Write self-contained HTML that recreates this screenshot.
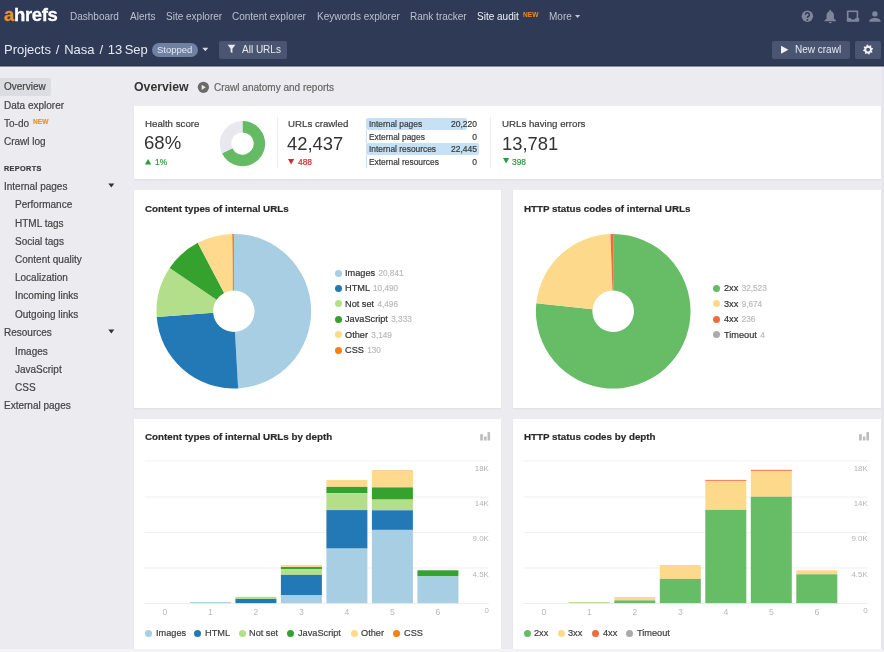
<!DOCTYPE html>
<html><head><meta charset="utf-8"><style>
html,body{margin:0;padding:0;}
body{width:884px;height:652px;overflow:hidden;position:relative;background:#ebebf0;font-family:"Liberation Sans", sans-serif;}
.t{position:absolute;white-space:nowrap;will-change:transform;-webkit-text-stroke:0.2px currentColor;}
.r{position:absolute;}
svg.r{overflow:visible;}
</style></head><body>
<div class="r" style="left:0px;top:0px;width:884px;height:66px;background:#2e3a56;"></div>
<div class="r" style="left:0px;top:64.8px;width:884px;height:1.2px;background:#27314a;"></div>
<div class="r" style="left:0px;top:66px;width:884px;height:1px;background:#8a90a0;"></div>
<div class="r" style="left:0px;top:67px;width:884px;height:2px;background:#eeeef2;"></div>
<div class="t" style="left:3.90px;top:5.74px;font-size:18.5px;line-height:18.5px;color:#ffffff;font-weight:700;-webkit-text-stroke:0;letter-spacing:-0.35px;-webkit-text-stroke:0.3px currentColor;"><span style="color:#f7901e">a</span>hrefs</div>
<div class="t" style="left:70.00px;top:11.83px;font-size:10px;line-height:10px;color:#b9c0cd;font-weight:400;-webkit-text-stroke:0;">Dashboard</div>
<div class="t" style="left:129.50px;top:11.83px;font-size:10px;line-height:10px;color:#b9c0cd;font-weight:400;-webkit-text-stroke:0;">Alerts</div>
<div class="t" style="left:165.60px;top:11.83px;font-size:10px;line-height:10px;color:#b9c0cd;font-weight:400;-webkit-text-stroke:0;">Site explorer</div>
<div class="t" style="left:232.30px;top:11.83px;font-size:10px;line-height:10px;color:#b9c0cd;font-weight:400;-webkit-text-stroke:0;">Content explorer</div>
<div class="t" style="left:317.00px;top:11.83px;font-size:10px;line-height:10px;color:#b9c0cd;font-weight:400;-webkit-text-stroke:0;">Keywords explorer</div>
<div class="t" style="left:410.40px;top:11.83px;font-size:10px;line-height:10px;color:#b9c0cd;font-weight:400;-webkit-text-stroke:0;">Rank tracker</div>
<div class="t" style="left:477.40px;top:11.83px;font-size:10px;line-height:10px;color:#eef0f4;font-weight:400;-webkit-text-stroke:0;">Site audit</div>
<div class="t" style="left:522.80px;top:11.71px;font-size:6.6px;line-height:6.6px;color:#f08c1c;font-weight:700;-webkit-text-stroke:0;">NEW</div>
<div class="t" style="left:548.60px;top:11.83px;font-size:10px;line-height:10px;color:#b9c0cd;font-weight:400;-webkit-text-stroke:0;">More</div>
<svg class="r" style="left:575.3px;top:15.2px" width="6" height="4"><path d="M0 0h5.2l-2.6 3z" fill="#c3c9d6"/></svg>
<svg class="r" style="left:800px;top:9px" width="84" height="15" viewBox="0 0 84 15">
<circle cx="7.4" cy="7.3" r="5.7" fill="#7d869b"/>
<path d="M5.5 5.7A1.95 1.95 0 1 1 8.3 7.5Q7.4 7.9 7.4 9" fill="none" stroke="#2e3a56" stroke-width="1.5"/>
<circle cx="7.4" cy="10.9" r="0.85" fill="#2e3a56"/>
<circle cx="30.25" cy="2" r="1.1" fill="#7d869b"/>
<path d="M30.25 2.2c-2.3 0-3.7 1.9-3.7 4.2v2.5c0 0.9-1 1.7-2 2.4v0.9h11.4v-0.9c-1-0.7-2-1.5-2-2.4V6.4c0-2.3-1.4-4.2-3.7-4.2z" fill="#7d869b"/>
<path d="M28.75 12.9h3a1.5 1.3 0 0 1-3 0z" fill="#7d869b"/>
<rect x="47.7" y="2.3" width="9.7" height="9.5" fill="none" stroke="#7d869b" stroke-width="1.6"/>
<path d="M46.9 9h3.5l1.3 1.5h2.8l1.3-1.5h3.4v3.6H46.9z" fill="#7d869b"/>
<circle cx="74.9" cy="4.9" r="2.7" fill="#7d869b"/>
<path d="M69.1 12.7c0-2.4 2.6-3.8 5.8-3.8s5.8 1.4 5.8 3.8z" fill="#7d869b"/>
</svg>
<div class="t" style="left:4.00px;top:42.60px;font-size:13px;line-height:13px;color:#e6e9ef;font-weight:400;-webkit-text-stroke:0;word-spacing:-1.2px;">Projects&nbsp;&nbsp;/&nbsp;&nbsp;Nasa&nbsp;&nbsp;/&nbsp;&nbsp;13 Sep</div>
<div class="r" style="left:151.8px;top:42.5px;width:46px;height:14.2px;background:#7080a2;border-radius:8px;"></div>
<div class="t" style="left:157.30px;top:45.26px;font-size:9.5px;line-height:9.5px;color:#e3e7ef;font-weight:400;-webkit-text-stroke:0;">Stopped</div>
<svg class="r" style="left:202px;top:47px" width="7" height="5"><path d="M0.3 0.8h6l-3 3.4z" fill="#d5dae4"/></svg>
<div class="r" style="left:219px;top:40.5px;width:68px;height:18.2px;background:#4a5671;border-radius:2px;"></div>
<svg class="r" style="left:227px;top:44px" width="9" height="10"><path d="M0.6 0.8h7.8L5.4 4.8v4.4L3.6 7.9V4.8z" fill="#e6e9ef"/></svg>
<div class="t" style="left:241.70px;top:45.13px;font-size:10px;line-height:10px;color:#e6e9ef;font-weight:400;-webkit-text-stroke:0;">All URLs</div>
<div class="r" style="left:772.4px;top:40.5px;width:77.4px;height:18.3px;background:#4a5671;border-radius:2px;"></div>
<svg class="r" style="left:780px;top:45px" width="10" height="10"><path d="M1 0.8L8.4 4.8 1 8.8z" fill="#f0f2f6"/></svg>
<div class="t" style="left:795.20px;top:45.23px;font-size:10px;line-height:10px;color:#e6e9ef;font-weight:400;-webkit-text-stroke:0;">New crawl</div>
<div class="r" style="left:855.2px;top:40.5px;width:25.5px;height:18.3px;background:#4a5671;border-radius:2px;"></div>
<svg class="r" style="left:0;top:0" width="884" height="66"><path d="M866.65 44.82 L867.61 44.62 L868.47 45.82 L869.20 45.96 L870.46 45.19 L871.27 45.73 L871.04 47.19 L871.45 47.81 L872.88 48.15 L873.08 49.11 L871.88 49.97 L871.74 50.70 L872.51 51.96 L871.97 52.77 L870.51 52.54 L869.89 52.95 L869.55 54.38 L868.59 54.58 L867.73 53.38 L867.00 53.24 L865.74 54.01 L864.93 53.47 L865.16 52.01 L864.75 51.39 L863.32 51.05 L863.12 50.09 L864.32 49.23 L864.46 48.50 L863.69 47.24 L864.23 46.43 L865.69 46.66 L866.31 46.25Z M870.0 49.6 A1.9 1.9 0 1 0 866.2 49.6 A1.9 1.9 0 1 0 870.0 49.6Z" fill="#f0f2f6" fill-rule="evenodd"/></svg>
<div class="r" style="left:0px;top:78px;width:50.7px;height:17.7px;background:#dcdde3;border-radius:0 2px 2px 0;"></div>
<div class="t" style="left:4.20px;top:82.44px;font-size:10px;line-height:10px;color:#444444;font-weight:400;">Overview</div>
<div class="t" style="left:4.20px;top:100.84px;font-size:10px;line-height:10px;color:#444444;font-weight:400;">Data explorer</div>
<div class="t" style="left:4.20px;top:119.03px;font-size:10px;line-height:10px;color:#444444;font-weight:400;">To-do</div>
<div class="t" style="left:4.20px;top:137.34px;font-size:10px;line-height:10px;color:#444444;font-weight:400;">Crawl log</div>
<div class="t" style="left:33.20px;top:118.51px;font-size:6.6px;line-height:6.6px;color:#f7901e;font-weight:700;">NEW</div>
<div class="t" style="left:4.30px;top:165.12px;font-size:7.3px;line-height:7.3px;color:#3a3a3a;font-weight:700;letter-spacing:0.35px;">REPORTS</div>
<div class="t" style="left:4.20px;top:182.24px;font-size:10px;line-height:10px;color:#444444;font-weight:400;">Internal pages</div>
<svg class="r" style="left:108px;top:183px" width="7" height="5"><path d="M0.3 0.4h6l-3 4.2z" fill="#333"/></svg>
<div class="t" style="left:15.40px;top:200.44px;font-size:10px;line-height:10px;color:#444444;font-weight:400;">Performance</div>
<div class="t" style="left:15.40px;top:218.63px;font-size:10px;line-height:10px;color:#444444;font-weight:400;">HTML tags</div>
<div class="t" style="left:15.40px;top:236.83px;font-size:10px;line-height:10px;color:#444444;font-weight:400;">Social tags</div>
<div class="t" style="left:15.40px;top:255.03px;font-size:10px;line-height:10px;color:#444444;font-weight:400;">Content quality</div>
<div class="t" style="left:15.40px;top:273.23px;font-size:10px;line-height:10px;color:#444444;font-weight:400;">Localization</div>
<div class="t" style="left:15.40px;top:291.43px;font-size:10px;line-height:10px;color:#444444;font-weight:400;">Incoming links</div>
<div class="t" style="left:15.40px;top:309.63px;font-size:10px;line-height:10px;color:#444444;font-weight:400;">Outgoing links</div>
<div class="t" style="left:4.20px;top:328.44px;font-size:10px;line-height:10px;color:#444444;font-weight:400;">Resources</div>
<svg class="r" style="left:108px;top:329px" width="7" height="5"><path d="M0.3 0.4h6l-3 4.2z" fill="#333"/></svg>
<div class="t" style="left:15.40px;top:346.63px;font-size:10px;line-height:10px;color:#444444;font-weight:400;">Images</div>
<div class="t" style="left:15.40px;top:364.83px;font-size:10px;line-height:10px;color:#444444;font-weight:400;">JavaScript</div>
<div class="t" style="left:15.40px;top:383.03px;font-size:10px;line-height:10px;color:#444444;font-weight:400;">CSS</div>
<div class="t" style="left:4.20px;top:401.24px;font-size:10px;line-height:10px;color:#444444;font-weight:400;">External pages</div>
<div class="t" style="left:133.80px;top:81.49px;font-size:12.3px;line-height:12.3px;color:#353535;font-weight:700;-webkit-text-stroke:0;">Overview</div>
<svg class="r" style="left:197px;top:81px" width="13" height="13"><circle cx="6.4" cy="6.3" r="5.6" fill="#6a6a6a"/><path d="M4.7 3.7l4 2.6-4 2.6z" fill="#ebebf0"/></svg>
<div class="t" style="left:214.00px;top:83.34px;font-size:10px;line-height:10px;color:#666666;font-weight:400;">Crawl anatomy and reports</div>
<div class="r" style="left:134px;top:106px;width:746.6px;height:73.2px;background:#ffffff;box-shadow:0 1px 1.5px rgba(40,40,70,0.07);"></div>
<div class="t" style="left:144.90px;top:119.39px;font-size:9.7px;line-height:9.7px;color:#3c3c3c;font-weight:400;">Health score</div>
<div class="t" style="left:144.20px;top:134.46px;font-size:18.6px;line-height:18.6px;color:#333333;font-weight:400;-webkit-text-stroke:0;">68%</div>
<svg class="r" style="left:145px;top:158.6px" width="8" height="7"><path d="M0 5.6h6.2L3.1 0z" fill="#2e9a3e"/></svg>
<div class="t" style="left:154.60px;top:158.09px;font-size:8.4px;line-height:8.4px;color:#2e9a3e;font-weight:400;">1%</div>
<svg class="r" style="left:0;top:0" width="884" height="652"><path d="M242.500 121.000A22.6 22.6 0 1 1 222.051 153.223L232.366 148.369A11.2 11.2 0 1 0 242.500 132.400Z" fill="#65bb64"/><path d="M222.051 153.223A22.6 22.6 0 0 1 242.500 121.000L242.500 132.400A11.2 11.2 0 0 0 232.366 148.369Z" fill="#e8e8ee"/></svg>
<div class="r" style="left:276.6px;top:117px;width:1px;height:51px;background:#ececf0;"></div>
<div class="t" style="left:288.00px;top:119.39px;font-size:9.7px;line-height:9.7px;color:#3c3c3c;font-weight:400;">URLs crawled</div>
<div class="t" style="left:287.40px;top:134.62px;font-size:18.4px;line-height:18.4px;color:#333333;font-weight:400;-webkit-text-stroke:0;">42,437</div>
<svg class="r" style="left:288.3px;top:158.6px" width="8" height="7"><path d="M0 0h6.2L3.1 5.6z" fill="#d4262f"/></svg>
<div class="t" style="left:298.00px;top:158.09px;font-size:8.4px;line-height:8.4px;color:#d4262f;font-weight:400;">488</div>
<div class="r" style="left:366px;top:117.6px;width:101.3px;height:12.4px;background:#c5e1f3;border-radius:2px;"></div>
<div class="r" style="left:366px;top:130px;width:1px;height:13px;background:#c5e1f3;"></div>
<div class="r" style="left:366px;top:143px;width:113px;height:12.4px;background:#c5e1f3;border-radius:2px;"></div>
<div class="r" style="left:366px;top:155.4px;width:1px;height:12.6px;background:#c5e1f3;"></div>
<div class="t" style="left:368.70px;top:120.49px;font-size:8.4px;line-height:8.4px;color:#3a3a3a;font-weight:400;">Internal pages</div>
<div class="t" style="left:400px;width:77px;text-align:right;top:120.49px;font-size:8.5px;line-height:8.4px;color:#3a3a3a">20,220</div>
<div class="t" style="left:368.70px;top:132.99px;font-size:8.4px;line-height:8.4px;color:#3a3a3a;font-weight:400;">External pages</div>
<div class="t" style="left:400px;width:77px;text-align:right;top:132.99px;font-size:8.5px;line-height:8.4px;color:#3a3a3a">0</div>
<div class="t" style="left:368.70px;top:145.49px;font-size:8.4px;line-height:8.4px;color:#3a3a3a;font-weight:400;">Internal resources</div>
<div class="t" style="left:400px;width:77px;text-align:right;top:145.49px;font-size:8.5px;line-height:8.4px;color:#3a3a3a">22,445</div>
<div class="t" style="left:368.70px;top:157.99px;font-size:8.4px;line-height:8.4px;color:#3a3a3a;font-weight:400;">External resources</div>
<div class="t" style="left:400px;width:77px;text-align:right;top:157.99px;font-size:8.5px;line-height:8.4px;color:#3a3a3a">0</div>
<div class="r" style="left:490px;top:117px;width:1px;height:51px;background:#ececf0;"></div>
<div class="t" style="left:502.30px;top:119.39px;font-size:9.7px;line-height:9.7px;color:#3c3c3c;font-weight:400;">URLs having errors</div>
<div class="t" style="left:502.20px;top:134.62px;font-size:18.4px;line-height:18.4px;color:#333333;font-weight:400;-webkit-text-stroke:0;">13,781</div>
<svg class="r" style="left:502.6px;top:158.4px" width="8" height="7"><path d="M0 0h6.2L3.1 5.6z" fill="#2e9a3e"/></svg>
<div class="t" style="left:511.80px;top:158.09px;font-size:8.4px;line-height:8.4px;color:#2e9a3e;font-weight:400;">398</div>
<div class="r" style="left:134px;top:190.3px;width:367.4px;height:217.5px;background:#ffffff;box-shadow:0 1px 1.5px rgba(40,40,70,0.07);"></div>
<div class="r" style="left:512.7px;top:190.3px;width:367.9px;height:217.5px;background:#ffffff;box-shadow:0 1px 1.5px rgba(40,40,70,0.07);"></div>
<div class="r" style="left:134px;top:418.5px;width:367.4px;height:230.7px;background:#ffffff;box-shadow:0 1px 1.5px rgba(40,40,70,0.07);"></div>
<div class="r" style="left:512.7px;top:418.5px;width:367.9px;height:230.7px;background:#ffffff;box-shadow:0 1px 1.5px rgba(40,40,70,0.07);"></div>
<div class="t" style="left:145.00px;top:204.00px;font-size:9.8px;line-height:9.8px;color:#2b2b2b;font-weight:700;">Content types of internal URLs</div>
<div class="t" style="left:524.00px;top:204.00px;font-size:9.8px;line-height:9.8px;color:#2b2b2b;font-weight:700;">HTTP status codes of internal URLs</div>
<div class="t" style="left:145.00px;top:432.30px;font-size:9.8px;line-height:9.8px;color:#2b2b2b;font-weight:700;">Content types of internal URLs by depth</div>
<div class="t" style="left:524.00px;top:432.30px;font-size:9.8px;line-height:9.8px;color:#2b2b2b;font-weight:700;">HTTP status codes by depth</div>
<svg class="r" style="left:0;top:0" width="884" height="652"><path d="M233.800 233.900A77.3 77.3 0 0 1 238.129 388.379L234.959 331.868A20.7 20.7 0 0 0 233.800 290.500Z" fill="#a8cee4"/><path d="M238.129 388.379A77.3 77.3 0 0 1 156.710 316.897L213.156 312.726A20.7 20.7 0 0 0 234.959 331.868Z" fill="#2379b5"/><path d="M156.710 316.897A77.3 77.3 0 0 1 169.649 268.073L216.621 299.651A20.7 20.7 0 0 0 213.156 312.726Z" fill="#b3df8b"/><path d="M169.649 268.073A77.3 77.3 0 0 1 197.730 242.831L224.141 292.892A20.7 20.7 0 0 0 216.621 299.651Z" fill="#35a12f"/><path d="M197.730 242.831A77.3 77.3 0 0 1 232.312 233.914L233.402 290.504A20.7 20.7 0 0 0 224.141 292.892Z" fill="#fed98e"/><path d="M232.312 233.914A77.3 77.3 0 0 1 233.800 233.900L233.800 290.500A20.7 20.7 0 0 0 233.402 290.504Z" fill="#fd7f10"/><path d="M233.4 290.5V233.9" stroke="#fd7f10" stroke-width="1.1"/><path d="M613.200 234.000A77.3 77.3 0 1 1 536.309 303.357L592.510 309.163A20.8 20.8 0 1 0 613.200 290.500Z" fill="#67bc66"/><path d="M536.309 303.357A77.3 77.3 0 0 1 610.454 234.049L612.461 290.513A20.8 20.8 0 0 0 592.510 309.163Z" fill="#fdd98b"/><path d="M610.454 234.049A77.3 77.3 0 0 1 613.154 234.000L613.188 290.500A20.8 20.8 0 0 0 612.461 290.513Z" fill="#f26a3b"/><path d="M613.154 234.000A77.3 77.3 0 0 1 613.200 234.000L613.200 290.500A20.8 20.8 0 0 0 613.188 290.500Z" fill="#aaaaaa"/></svg>
<div class="r" style="left:334.5px;top:269.50px;width:7px;height:7px;border-radius:50%;background:#a8cee4"></div>
<div class="t" style="left:345.00px;top:268.91px;font-size:9.2px;line-height:9.2px;color:#333;font-weight:400;">Images <span style="color:#bababa;font-size:8.2px;margin-left:0.8px">20,841</span></div>
<div class="r" style="left:334.5px;top:284.95px;width:7px;height:7px;border-radius:50%;background:#2379b5"></div>
<div class="t" style="left:345.00px;top:284.36px;font-size:9.2px;line-height:9.2px;color:#333;font-weight:400;">HTML <span style="color:#bababa;font-size:8.2px;margin-left:0.8px">10,490</span></div>
<div class="r" style="left:334.5px;top:300.40px;width:7px;height:7px;border-radius:50%;background:#b3df8b"></div>
<div class="t" style="left:345.00px;top:299.81px;font-size:9.2px;line-height:9.2px;color:#333;font-weight:400;">Not set <span style="color:#bababa;font-size:8.2px;margin-left:0.8px">4,496</span></div>
<div class="r" style="left:334.5px;top:315.85px;width:7px;height:7px;border-radius:50%;background:#35a12f"></div>
<div class="t" style="left:345.00px;top:315.26px;font-size:9.2px;line-height:9.2px;color:#333;font-weight:400;">JavaScript <span style="color:#bababa;font-size:8.2px;margin-left:0.8px">3,333</span></div>
<div class="r" style="left:334.5px;top:331.30px;width:7px;height:7px;border-radius:50%;background:#fed98e"></div>
<div class="t" style="left:345.00px;top:330.71px;font-size:9.2px;line-height:9.2px;color:#333;font-weight:400;">Other <span style="color:#bababa;font-size:8.2px;margin-left:0.8px">3,149</span></div>
<div class="r" style="left:334.5px;top:346.75px;width:7px;height:7px;border-radius:50%;background:#fd7f10"></div>
<div class="t" style="left:345.00px;top:346.16px;font-size:9.2px;line-height:9.2px;color:#333;font-weight:400;">CSS <span style="color:#bababa;font-size:8.2px;margin-left:0.8px">130</span></div>
<div class="r" style="left:713.1px;top:285.00px;width:7px;height:7px;border-radius:50%;background:#67bc66"></div>
<div class="t" style="left:724.00px;top:284.41px;font-size:9.2px;line-height:9.2px;color:#333;font-weight:400;">2xx <span style="color:#bababa;font-size:8.2px;margin-left:0.8px">32,523</span></div>
<div class="r" style="left:713.1px;top:300.40px;width:7px;height:7px;border-radius:50%;background:#fdd98b"></div>
<div class="t" style="left:724.00px;top:299.81px;font-size:9.2px;line-height:9.2px;color:#333;font-weight:400;">3xx <span style="color:#bababa;font-size:8.2px;margin-left:0.8px">9,674</span></div>
<div class="r" style="left:713.1px;top:315.80px;width:7px;height:7px;border-radius:50%;background:#f26a3b"></div>
<div class="t" style="left:724.00px;top:315.21px;font-size:9.2px;line-height:9.2px;color:#333;font-weight:400;">4xx <span style="color:#bababa;font-size:8.2px;margin-left:0.8px">236</span></div>
<div class="r" style="left:713.1px;top:331.20px;width:7px;height:7px;border-radius:50%;background:#aaaaaa"></div>
<div class="t" style="left:724.00px;top:330.61px;font-size:9.2px;line-height:9.2px;color:#333;font-weight:400;">Timeout <span style="color:#bababa;font-size:8.2px;margin-left:0.8px">4</span></div>
<svg class="r" style="left:0;top:0" width="884" height="652"><rect x="144.70000000000002" y="460.5" width="344" height="1" fill="#efefef"/><rect x="144.70000000000002" y="496.5" width="344" height="1" fill="#efefef"/><rect x="144.70000000000002" y="532.0" width="344" height="1" fill="#efefef"/><rect x="144.70000000000002" y="567.5" width="344" height="1" fill="#efefef"/><rect x="144.70000000000002" y="603" width="344" height="1" fill="#ececec"/><text x="164.90" y="615.3" font-family="Liberation Sans" font-size="8.6" fill="#b8b8b8" text-anchor="middle">0</text><rect x="189.90" y="602.10" width="41" height="1.00" fill="#a8cee4"/><text x="210.40" y="615.3" font-family="Liberation Sans" font-size="8.6" fill="#b8b8b8" text-anchor="middle">1</text><rect x="235.40" y="596.80" width="41" height="2.20" fill="#b3df8b"/><rect x="235.40" y="599.00" width="41" height="4.10" fill="#2379b5"/><text x="255.90" y="615.3" font-family="Liberation Sans" font-size="8.6" fill="#b8b8b8" text-anchor="middle">2</text><rect x="280.90" y="564.90" width="41" height="2.10" fill="#fed98e"/><rect x="280.90" y="567.00" width="41" height="2.20" fill="#35a12f"/><rect x="280.90" y="569.20" width="41" height="5.70" fill="#b3df8b"/><rect x="280.90" y="574.90" width="41" height="20.10" fill="#2379b5"/><rect x="280.90" y="595.00" width="41" height="8.10" fill="#a8cee4"/><text x="301.40" y="615.3" font-family="Liberation Sans" font-size="8.6" fill="#b8b8b8" text-anchor="middle">3</text><rect x="326.40" y="479.90" width="41" height="7.00" fill="#fed98e"/><rect x="326.40" y="486.90" width="41" height="6.30" fill="#35a12f"/><rect x="326.40" y="493.20" width="41" height="16.90" fill="#b3df8b"/><rect x="326.40" y="510.10" width="41" height="38.50" fill="#2379b5"/><rect x="326.40" y="548.60" width="41" height="54.50" fill="#a8cee4"/><text x="346.90" y="615.3" font-family="Liberation Sans" font-size="8.6" fill="#b8b8b8" text-anchor="middle">4</text><rect x="371.90" y="470.00" width="41" height="0.70" fill="#fdb77a"/><rect x="371.90" y="470.70" width="41" height="16.70" fill="#fed98e"/><rect x="371.90" y="487.40" width="41" height="12.20" fill="#35a12f"/><rect x="371.90" y="499.60" width="41" height="10.70" fill="#b3df8b"/><rect x="371.90" y="510.30" width="41" height="19.60" fill="#2379b5"/><rect x="371.90" y="529.90" width="41" height="73.20" fill="#a8cee4"/><text x="392.40" y="615.3" font-family="Liberation Sans" font-size="8.6" fill="#b8b8b8" text-anchor="middle">5</text><rect x="417.40" y="570.30" width="41" height="6.10" fill="#35a12f"/><rect x="417.40" y="576.40" width="41" height="26.70" fill="#a8cee4"/><text x="437.90" y="615.3" font-family="Liberation Sans" font-size="8.6" fill="#b8b8b8" text-anchor="middle">6</text><text x="488.79999999999995" y="470.7" font-family="Liberation Sans" font-size="7.9" fill="#b3b3b3" text-anchor="end">18K</text><text x="488.79999999999995" y="505.7" font-family="Liberation Sans" font-size="7.9" fill="#b3b3b3" text-anchor="end">14K</text><text x="488.79999999999995" y="541.2" font-family="Liberation Sans" font-size="7.9" fill="#b3b3b3" text-anchor="end">9.0K</text><text x="488.79999999999995" y="576.5" font-family="Liberation Sans" font-size="7.9" fill="#b3b3b3" text-anchor="end">4.5K</text><text x="488.79999999999995" y="612.6" font-family="Liberation Sans" font-size="7.9" fill="#b3b3b3" text-anchor="end">0</text><rect x="480.20000000000005" y="434.2" width="2.7" height="6.3" fill="#bdbdbd"/><rect x="484.00000000000006" y="436.5" width="2.5" height="4" fill="#bdbdbd"/><rect x="487.50000000000006" y="432.1" width="2.6" height="8.4" fill="#bdbdbd"/></svg>
<svg class="r" style="left:0;top:0" width="884" height="652"><rect x="523.5999999999999" y="460.5" width="344" height="1" fill="#efefef"/><rect x="523.5999999999999" y="496.5" width="344" height="1" fill="#efefef"/><rect x="523.5999999999999" y="532.0" width="344" height="1" fill="#efefef"/><rect x="523.5999999999999" y="567.5" width="344" height="1" fill="#efefef"/><rect x="523.5999999999999" y="603" width="344" height="1" fill="#ececec"/><text x="543.80" y="615.3" font-family="Liberation Sans" font-size="8.6" fill="#b8b8b8" text-anchor="middle">0</text><rect x="568.80" y="602.10" width="41" height="1.00" fill="#b3df8b"/><text x="589.30" y="615.3" font-family="Liberation Sans" font-size="8.6" fill="#b8b8b8" text-anchor="middle">1</text><rect x="614.30" y="597.00" width="41" height="3.40" fill="#fdd98b"/><rect x="614.30" y="600.40" width="41" height="2.70" fill="#67bc66"/><text x="634.80" y="615.3" font-family="Liberation Sans" font-size="8.6" fill="#b8b8b8" text-anchor="middle">2</text><rect x="659.80" y="565.00" width="41" height="13.90" fill="#fdd98b"/><rect x="659.80" y="578.90" width="41" height="24.20" fill="#67bc66"/><text x="680.30" y="615.3" font-family="Liberation Sans" font-size="8.6" fill="#b8b8b8" text-anchor="middle">3</text><rect x="705.30" y="479.90" width="41" height="1.30" fill="#f5845f"/><rect x="705.30" y="481.20" width="41" height="28.70" fill="#fdd98b"/><rect x="705.30" y="509.90" width="41" height="93.20" fill="#67bc66"/><text x="725.80" y="615.3" font-family="Liberation Sans" font-size="8.6" fill="#b8b8b8" text-anchor="middle">4</text><rect x="750.80" y="469.80" width="41" height="1.30" fill="#f5845f"/><rect x="750.80" y="471.10" width="41" height="25.60" fill="#fdd98b"/><rect x="750.80" y="496.70" width="41" height="106.40" fill="#67bc66"/><text x="771.30" y="615.3" font-family="Liberation Sans" font-size="8.6" fill="#b8b8b8" text-anchor="middle">5</text><rect x="796.30" y="570.30" width="41" height="4.00" fill="#fdd98b"/><rect x="796.30" y="574.30" width="41" height="28.80" fill="#67bc66"/><text x="816.80" y="615.3" font-family="Liberation Sans" font-size="8.6" fill="#b8b8b8" text-anchor="middle">6</text><text x="867.6999999999999" y="470.7" font-family="Liberation Sans" font-size="7.9" fill="#b3b3b3" text-anchor="end">18K</text><text x="867.6999999999999" y="505.7" font-family="Liberation Sans" font-size="7.9" fill="#b3b3b3" text-anchor="end">14K</text><text x="867.6999999999999" y="541.2" font-family="Liberation Sans" font-size="7.9" fill="#b3b3b3" text-anchor="end">9.0K</text><text x="867.6999999999999" y="576.5" font-family="Liberation Sans" font-size="7.9" fill="#b3b3b3" text-anchor="end">4.5K</text><text x="867.6999999999999" y="612.6" font-family="Liberation Sans" font-size="7.9" fill="#b3b3b3" text-anchor="end">0</text><rect x="859.0999999999999" y="434.2" width="2.7" height="6.3" fill="#bdbdbd"/><rect x="862.8999999999999" y="436.5" width="2.5" height="4" fill="#bdbdbd"/><rect x="866.3999999999999" y="432.1" width="2.6" height="8.4" fill="#bdbdbd"/></svg>
<div class="r" style="left:144.60px;top:629.6px;width:7px;height:7px;border-radius:50%;background:#a8cee4"></div>
<div class="t" style="left:155.80px;top:629.11px;font-size:9.2px;line-height:9.2px;color:#404040;font-weight:400;">Images</div>
<div class="r" style="left:193.80px;top:629.6px;width:7px;height:7px;border-radius:50%;background:#2379b5"></div>
<div class="t" style="left:204.70px;top:629.11px;font-size:9.2px;line-height:9.2px;color:#404040;font-weight:400;">HTML</div>
<div class="r" style="left:239.10px;top:629.6px;width:7px;height:7px;border-radius:50%;background:#b3df8b"></div>
<div class="t" style="left:249.00px;top:629.11px;font-size:9.2px;line-height:9.2px;color:#404040;font-weight:400;">Not set</div>
<div class="r" style="left:287.10px;top:629.6px;width:7px;height:7px;border-radius:50%;background:#35a12f"></div>
<div class="t" style="left:297.80px;top:629.11px;font-size:9.2px;line-height:9.2px;color:#404040;font-weight:400;">JavaScript</div>
<div class="r" style="left:350.50px;top:629.6px;width:7px;height:7px;border-radius:50%;background:#fed98e"></div>
<div class="t" style="left:361.40px;top:629.11px;font-size:9.2px;line-height:9.2px;color:#404040;font-weight:400;">Other</div>
<div class="r" style="left:393.00px;top:629.6px;width:7px;height:7px;border-radius:50%;background:#fd7f10"></div>
<div class="t" style="left:403.60px;top:629.11px;font-size:9.2px;line-height:9.2px;color:#404040;font-weight:400;">CSS</div>
<div class="r" style="left:523.50px;top:629.6px;width:7px;height:7px;border-radius:50%;background:#67bc66"></div>
<div class="t" style="left:534.20px;top:629.11px;font-size:9.2px;line-height:9.2px;color:#404040;font-weight:400;">2xx</div>
<div class="r" style="left:558.10px;top:629.6px;width:7px;height:7px;border-radius:50%;background:#fdd98b"></div>
<div class="t" style="left:568.40px;top:629.11px;font-size:9.2px;line-height:9.2px;color:#404040;font-weight:400;">3xx</div>
<div class="r" style="left:592.10px;top:629.6px;width:7px;height:7px;border-radius:50%;background:#f26a3b"></div>
<div class="t" style="left:602.80px;top:629.11px;font-size:9.2px;line-height:9.2px;color:#404040;font-weight:400;">4xx</div>
<div class="r" style="left:626.00px;top:629.6px;width:7px;height:7px;border-radius:50%;background:#aaaaaa"></div>
<div class="t" style="left:637.40px;top:629.11px;font-size:9.2px;line-height:9.2px;color:#404040;font-weight:400;">Timeout</div>
<div class="r" style="left:0px;top:649.3px;width:884px;height:3px;background:#f3f3f6;"></div>
<div class="r" style="left:881.5px;top:67px;width:2.5px;height:583px;background:#e5e5eb;"></div>
</body></html>
